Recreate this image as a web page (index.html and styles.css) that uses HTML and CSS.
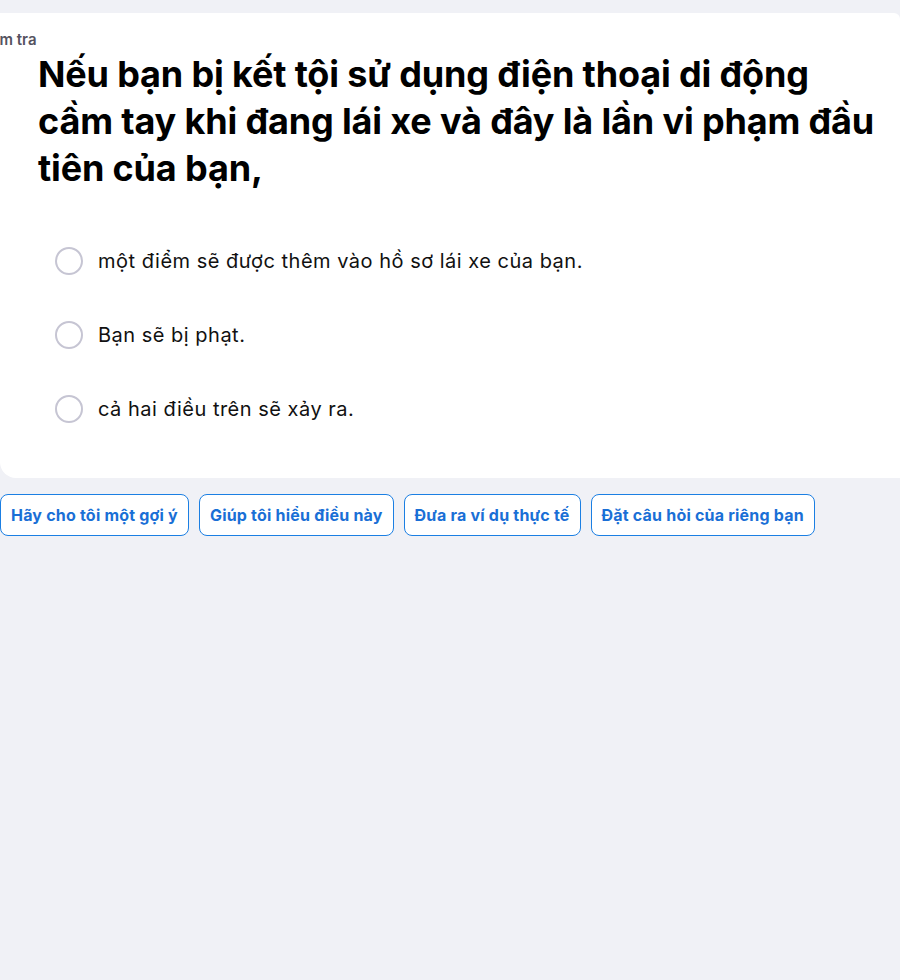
FILE: index.html
```html
<!DOCTYPE html>
<html lang="vi">
<head>
<meta charset="utf-8">
<link rel="stylesheet" href="styles.css">
</head>
<body>
<div class="page">
  <section class="card">
    <div class="tag">Kiểm tra</div>
    <h1 class="question">Nếu bạn bị kết tội sử dụng điện thoại di động cầm tay khi đang lái xe và đây là lần vi phạm đầu tiên của bạn,</h1>
    <ul class="options">
      <li class="option"><span class="radio"></span><span class="opt-text">một điểm sẽ được thêm vào hồ sơ lái xe của bạn.</span></li>
      <li class="option"><span class="radio"></span><span class="opt-text">Bạn sẽ bị phạt.</span></li>
      <li class="option"><span class="radio"></span><span class="opt-text">cả hai điều trên sẽ xảy ra.</span></li>
    </ul>
  </section>
  <div class="actions">
    <button class="chip">Hãy cho tôi một gợi ý</button>
    <button class="chip">Giúp tôi hiểu điều này</button>
    <button class="chip">Đưa ra ví dụ thực tế</button>
    <button class="chip">Đặt câu hỏi của riêng bạn</button>
  </div>
</div>
</body>
</html>
```
FILE: styles.css
```css
html, body {
  margin: 0;
  padding: 0;
  background: #f0f1f6;
  overflow: hidden;
  font-family: Inter, "Noto Sans", sans-serif;
}
.page {
  width: 900px;
  height: 980px;
  padding-top: 13px;
  box-sizing: border-box;
}
.card {
  background: #ffffff;
  border-radius: 0 6px 0 16px;
  padding: 18px 0 55px 0;
}
.tag {
  margin-left: -24px;
  font-size: 15px;
  font-weight: 600;
  color: #55535f;
  line-height: 17px;
}
.question {
  margin: 3px 0 0 38px;
  font-size: 36px;
  line-height: 47px;
  font-weight: 700;
  letter-spacing: -0.15px;
  color: #000;
  width: 845px;
}
.options {
  list-style: none;
  margin: 55px 0 0 0;
  padding: 0 0 0 55px;
  display: flex;
  flex-direction: column;
  gap: 46px;
}
.option {
  display: flex;
  align-items: center;
  gap: 15px;
  height: 28px;
}
.radio {
  width: 24px;
  height: 24px;
  border: 2px solid #c6c5d3;
  border-radius: 50%;
  flex: none;
}
.opt-text {
  font-size: 20px;
  letter-spacing: 0.5px;
  color: #111;
}
.actions {
  display: flex;
  gap: 10px;
  margin-top: 16px;
}
.chip {
  height: 42px;
  padding: 0 10px;
  border: 1px solid #1b7fe3;
  border-radius: 8px;
  background: #fff;
  color: #1a6fd6;
  font-family: inherit;
  font-size: 16px;
  letter-spacing: 0.2px;
  font-weight: 700;
}
```
